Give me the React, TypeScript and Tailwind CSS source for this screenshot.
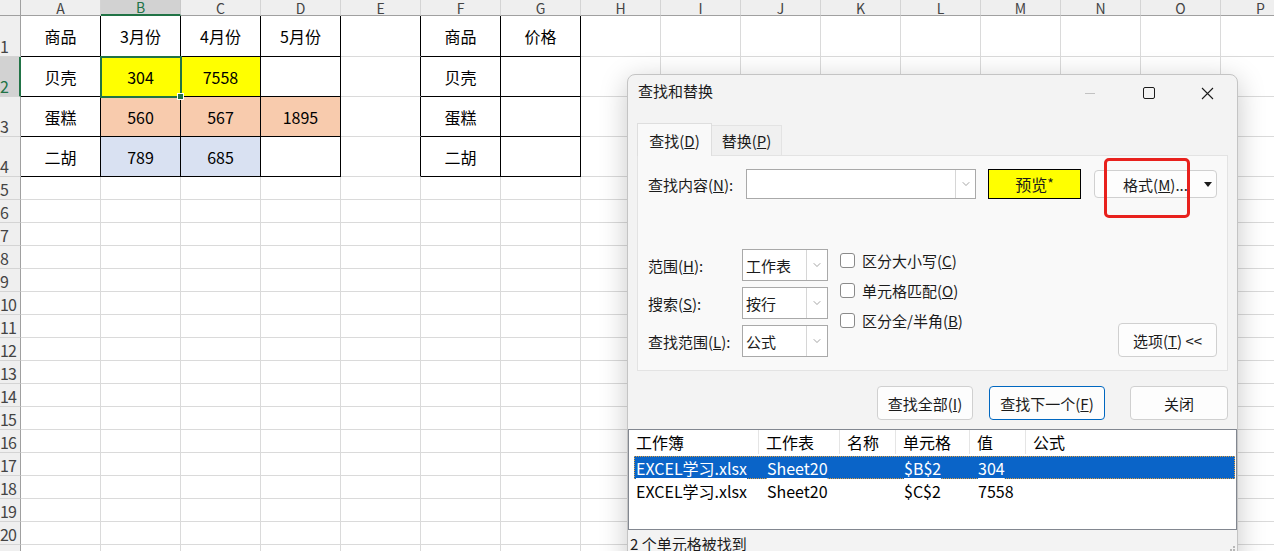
import { ChevronDown } from "lucide-react";

const COLS = "ABCDEFGHIJKLMNOP".split("");
const ROWS = Array.from({ length: 21 }, (_, i) => i + 1);

type Spec = { t?: string; fill?: "y" | "p" | "b"; box?: boolean; edge?: boolean };

// cells that carry a value, a fill or the black table borders
const SHEET: Record<string, Spec> = {
  A1: { t: "商品", box: true },
  B1: { t: "3月份", box: true },
  C1: { t: "4月份", box: true },
  D1: { t: "5月份", box: true },
  A2: { t: "贝壳", box: true },
  B2: { t: "304", fill: "y", box: true },
  C2: { t: "7558", fill: "y", box: true },
  D2: { box: true },
  A3: { t: "蛋糕", box: true },
  B3: { t: "560", fill: "p", box: true },
  C3: { t: "567", fill: "p", box: true },
  D3: { t: "1895", fill: "p", box: true },
  A4: { t: "二胡", box: true },
  B4: { t: "789", fill: "b", box: true },
  C4: { t: "685", fill: "b", box: true },
  D4: { box: true },
  E1: { edge: true },
  E2: { edge: true },
  E3: { edge: true },
  E4: { edge: true },
  F1: { t: "商品", box: true },
  G1: { t: "价格", box: true },
  F2: { t: "贝壳", box: true },
  G2: { box: true },
  F3: { t: "蛋糕", box: true },
  G3: { box: true },
  F4: { t: "二胡", box: true },
  G4: { box: true },
};

function Cell({ id }: { id: string }) {
  const s = SHEET[id] ?? {};
  const fill =
    s.fill === "y"
      ? "bg-[#ffff00]"
      : s.fill === "p"
        ? "bg-[#f8cbad]"
        : s.fill === "b"
          ? "bg-[#d9e1f2]"
          : "bg-white";
  const border = s.box
    ? "border-r-black border-b-black"
    : s.edge
      ? "border-r-black border-b-[#dadada]"
      : "border-r-[#dadada] border-b-[#dadada]";
  const selected = id === "B2";
  return (
    <div
      className={`relative flex items-center justify-center border-r border-b text-[16px] leading-none text-black ${border} ${fill} ${selected ? "z-10" : ""}`}
    >
      {s.t}
      {selected && (
        <>
          <div className="pointer-events-none absolute -left-px -top-px h-[42px] w-[82px] border-2 border-[#217346]" />
          <div className="absolute -bottom-[4px] -right-[4px] h-[7px] w-[7px] border border-white bg-[#217346]" />
        </>
      )}
    </div>
  );
}

function Sheet() {
  return (
    <div className="grid grid-cols-[21px_repeat(16,80px)] grid-rows-[16px_41px_40px_40px_40px_repeat(17,23px)] font-['Noto_Sans_CJK_SC',sans-serif]">
      <div className="border-r border-b border-r-[#a0a0a0] border-b-[#a0a0a0] bg-[#efefef]" />
      {COLS.map((c) => (
        <div
          key={c}
          className={
            c === "B"
              ? "flex items-center justify-center border-r border-b-2 border-r-[#c8c8c8] border-b-[#217346] bg-[#d2d2d2] text-[14px] leading-[14px] text-[#217346]"
              : "flex items-center justify-center border-r border-b border-r-[#d4d4d4] border-b-[#a0a0a0] bg-[#efefef] text-[14px] leading-[14px] text-[#444]"
          }
        >
          {c}
        </div>
      ))}
      {ROWS.map((r) => (
        <div key={r} className="contents">
          <div
            className={
              r === 2
                ? "flex items-end overflow-hidden border-r-2 border-b border-r-[#217346] border-b-[#d4d4d4] bg-[#d2d2d2] text-[16px] leading-[20px] text-[#217346]"
                : "flex items-end overflow-hidden border-r border-b border-r-[#a0a0a0] border-b-[#d4d4d4] bg-[#efefef] text-[16px] leading-[20px] tracking-[-1px] text-[#444]"
            }
          >
            {r}
          </div>
          {COLS.map((c) => (
            <Cell key={c + r} id={c + r} />
          ))}
        </div>
      ))}
    </div>
  );
}

function Select({ value }: { value: string }) {
  return (
    <div className="flex h-[32px] w-[86px] border border-[#a9a9a9] bg-white">
      <div className="flex flex-1 items-center pl-[3px]">{value}</div>
      <div className="flex w-[21px] items-center justify-center border-l border-[#d6d6d6]">
        <ChevronDown size={12} strokeWidth={1.2} color="#666" />
      </div>
    </div>
  );
}

function Check({ children }: { children: React.ReactNode }) {
  return (
    <div className="flex h-[30px] items-center gap-[7px]">
      <div className="h-[15px] w-[15px] rounded-[3px] border border-[#8a8a8a] bg-white" />
      <div>{children}</div>
    </div>
  );
}

const LIST_ROWS = [
  { book: "EXCEL学习.xlsx", sheet: "Sheet20", cell: "$B$2", val: "304", sel: true },
  { book: "EXCEL学习.xlsx", sheet: "Sheet20", cell: "$C$2", val: "7558", sel: false },
];

function Dialog() {
  return (
    <div className="absolute left-[627px] top-[74px] h-[500px] w-[611px] rounded-t-[8px] border border-[#c4c4c4] bg-[#f3f3f3] font-['Noto_Sans_CJK_SC',sans-serif] text-[15px] leading-none text-[#1b1b1b] shadow-[0_6px_28px_rgba(0,0,0,0.22)]">
      {/* title bar */}
      <div className="flex h-[36px] items-center">
        <div className="pb-[5px] pl-[10px]">查找和替换</div>
        <div className="ml-auto flex h-full">
          <div className="flex w-[59px] items-center justify-center">
            <div className="h-px w-[10px] bg-[#c2c2c2]" />
          </div>
          <div className="flex w-[59px] items-center justify-center">
            <div className="h-[12px] w-[12px] rounded-[2px] border border-[#1b1b1b]" />
          </div>
          <div className="flex w-[59px] items-center justify-center">
            <svg width="13" height="13" viewBox="0 0 13 13">
              <path d="M1 1 L12 12 M12 1 L1 12" stroke="#1b1b1b" strokeWidth="1.1" />
            </svg>
          </div>
        </div>
      </div>

      {/* tabs */}
      <div className="mt-[12px] flex h-[32px] items-end pl-[9px]">
        <div className="relative z-10 -mb-px flex h-[33px] w-[75px] items-center justify-center border border-b-0 border-[#dedede] bg-[#f9f9f9]">
          查找(<u>D</u>)
        </div>
        <div className="flex h-[30px] w-[70px] items-center justify-center border border-l-0 border-b-0 border-[#e3e3e3] bg-[#f0f0f0]">
          替换(<u>P</u>)
        </div>
      </div>

      {/* tab panel */}
      <div className="relative ml-[9px] h-[216px] w-[591px] border border-[#e3e3e3] bg-[#f9f9f9]">
        <div className="mt-[13px] flex h-[30px] items-center">
          <div className="w-[108px] pl-[10px]">
            查找内容(<u>N</u>):
          </div>
          <div className="flex h-[30px] w-[230px] border border-[#a9a9a9] bg-white">
            <div className="flex-1" />
            <div className="flex w-[20px] items-center justify-center border-l border-[#d6d6d6]">
              <ChevronDown size={12} strokeWidth={1.2} color="#666" />
            </div>
          </div>
          <div className="ml-[12px] flex h-[30px] w-[93px] items-center justify-center border border-black bg-[#ffff00] text-[16px]">
            预览<span className="mb-[2px] text-[14px]">*</span>
          </div>
          <div className="relative ml-[13px] flex h-[28px] w-[123px] items-center justify-center rounded-[4px] border border-[#d0d0d0] bg-[#fdfdfd]">
            格式(<u>M</u>)...
            <svg className="absolute right-[4px] top-[11px]" width="8" height="5" viewBox="0 0 8 5">
              <path d="M0 0 H8 L4 5 Z" fill="#1b1b1b" />
            </svg>
          </div>
        </div>

        {/* annotation */}
        <div className="pointer-events-none absolute left-[466px] top-[2px] h-[60px] w-[86px] rounded-[5px] border-[3px] border-[#e8211d]" />

        <div className="mt-[48px] flex items-end">
          <div className="flex flex-col gap-[6px] pt-[2px]">
            <div className="flex items-center">
              <div className="w-[104px] pl-[10px]">
                范围(<u>H</u>):
              </div>
              <Select value="工作表" />
            </div>
            <div className="flex items-center">
              <div className="w-[104px] pl-[10px]">
                搜索(<u>S</u>):
              </div>
              <Select value="按行" />
            </div>
            <div className="flex items-center">
              <div className="w-[104px] pl-[10px]">
                查找范围(<u>L</u>):
              </div>
              <Select value="公式" />
            </div>
          </div>
          <div className="-mt-[2px] ml-[12px] flex flex-col self-start">
            <Check>
              区分大小写(<u>C</u>)
            </Check>
            <Check>
              单元格匹配(<u>O</u>)
            </Check>
            <Check>
              区分全/半角(<u>B</u>)
            </Check>
          </div>
          <div className="ml-auto mr-[10px] flex h-[34px] w-[99px] items-center justify-center rounded-[4px] border border-[#d0d0d0] bg-[#fdfdfd]">
            选项(<u>T</u>) &lt;&lt;
          </div>
        </div>
      </div>

      {/* buttons */}
      <div className="mt-[15px] flex justify-end pr-[9px]">
        <div className="flex h-[34px] w-[96px] items-center justify-center rounded-[4px] border border-[#d0d0d0] bg-[#fdfdfd]">
          查找全部(<u>I</u>)
        </div>
        <div className="ml-[16px] flex h-[34px] w-[116px] items-center justify-center rounded-[4px] border border-[#0067c0] bg-[#fdfdfd]">
          查找下一个(<u>F</u>)
        </div>
        <div className="ml-[25px] flex h-[34px] w-[98px] items-center justify-center rounded-[4px] border border-[#d0d0d0] bg-[#fdfdfd]">
          关闭
        </div>
      </div>

      {/* results */}
      <div className="mt-[9px] h-[101px] border border-[#828790] bg-white text-[16px] text-black">
        <div className="flex h-[24px]">
          <div className="flex w-[130px] items-center border-r border-[#e5e5e5] pl-[7px]">工作簿</div>
          <div className="flex w-[81px] items-center border-r border-[#e5e5e5] pl-[7px]">工作表</div>
          <div className="flex w-[56px] items-center border-r border-[#e5e5e5] pl-[7px]">名称</div>
          <div className="flex w-[74px] items-center border-r border-[#e5e5e5] pl-[7px]">单元格</div>
          <div className="flex w-[56px] items-center border-r border-[#e5e5e5] pl-[7px]">值</div>
          <div className="flex items-center pl-[7px]">公式</div>
        </div>
        <div className="mt-[2px]">
          {LIST_ROWS.map((r) => (
            <div
              key={r.cell}
              className={
                r.sel
                  ? "ml-[5px] mr-px flex h-[23px] items-center border border-dotted border-[#e0a040] bg-[#0a64c8] text-white"
                  : "ml-[5px] mr-px flex h-[23px] items-center border border-transparent"
              }
            >
              <div className="w-[125px] pl-[1px]">
                <span className={r.sel ? "underline underline-offset-[3px]" : ""}>{r.book}</span>
              </div>
              <div className="w-[81px] pl-[7px]">
                <span className={r.sel ? "underline underline-offset-[3px]" : ""}>{r.sheet}</span>
              </div>
              <div className="w-[56px]" />
              <div className="w-[74px] pl-[7px]">
                <span className={r.sel ? "underline underline-offset-[3px]" : ""}>{r.cell}</span>
              </div>
              <div className="w-[56px] pl-[7px]">
                <span className={r.sel ? "underline underline-offset-[3px]" : ""}>{r.val}</span>
              </div>
            </div>
          ))}
        </div>
      </div>

      {/* status */}
      <div className="relative flex h-[26px] items-center pl-[2px]">
        2 个单元格被找到
        <svg className="absolute bottom-[2px] right-[2px]" width="8" height="8" viewBox="0 0 8 8">
          <rect x="6" y="0" width="2" height="2" fill="#b8b8b8" />
          <rect x="3" y="3" width="2" height="2" fill="#b8b8b8" />
          <rect x="6" y="3" width="2" height="2" fill="#b8b8b8" />
          <rect x="0" y="6" width="2" height="2" fill="#b8b8b8" />
          <rect x="3" y="6" width="2" height="2" fill="#b8b8b8" />
          <rect x="6" y="6" width="2" height="2" fill="#b8b8b8" />
        </svg>
      </div>
    </div>
  );
}

export default function App() {
  return (
    <div className="relative h-[551px] w-[1274px] overflow-hidden bg-white">
      <Sheet />
      <Dialog />
    </div>
  );
}
